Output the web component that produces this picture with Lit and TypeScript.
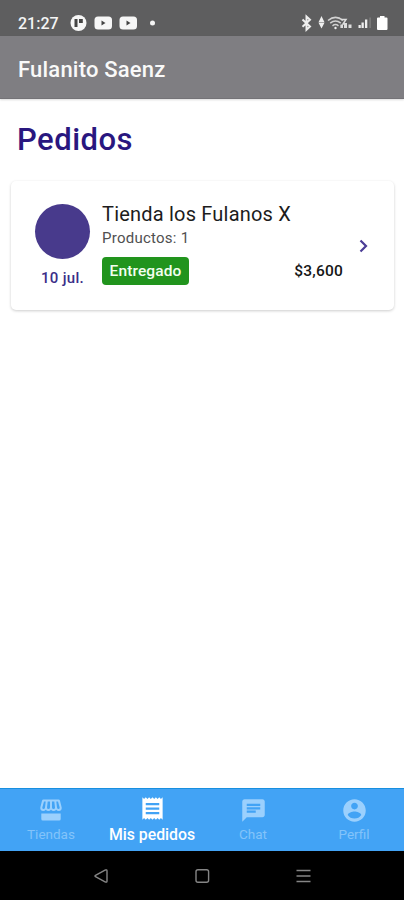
import { LitElement, html, svg, css } from "lit";
import { customElement, property } from "lit/decorators.js";
import { classMap } from "lit/directives/class-map.js";

@customElement("status-bar")
class StatusBar extends LitElement {
  static styles = css`
    :host { display: flex; align-items: center; height: 36px; box-sizing: border-box; padding: 10px 16px 0 18px; background: #5e5e5f; color: #f4f4f4; }
    .time { font: 500 16px/24px Roboto, sans-serif; width: 52px; padding-top: 1px; letter-spacing: 0; }
    svg { display: block; flex: none; }
    .notes { width: 88px; height: 18px; }
    .system { width: 90px; height: 18px; margin-left: auto; }
  `;
  render() {
    return html`
      <span class="time">21:27</span>
      <svg class="notes" viewBox="70 14 88 18">
        <circle cx="78.5" cy="23" r="8" fill="#f6f6f6" />
        <path d="M74.500 19h3v8h-3zM79 19h3.800v4H79z" fill="#444" />
        <rect x="94.500" y="16.500" width="17.500" height="13" rx="3.500" fill="#f6f6f6" />
        <path d="M101.500 20.500v5l4-2.500z" fill="#444" />
        <rect x="119.500" y="16.500" width="17.500" height="13" rx="3.500" fill="#f6f6f6" />
        <path d="M126.500 20.500v5l4-2.500z" fill="#444" />
        <circle cx="152.500" cy="23" r="2.500" fill="#f4f4f4" />
      </svg>
      <svg class="system" viewBox="298 14 90 18">
        <path d="M302.500 19.500l7.500 7-3.500 3.200V16.500l3.500 3.200-7.500 7" fill="none" stroke="#eee" stroke-width="2" />
        <path d="M321.500 16l3 6.200h-6zM321.500 28.500l3-5.700h-6z" fill="#eee" />
        <g fill="none" stroke="#d2d2d2" stroke-width="1.500">
          <path d="M328 20.500q7.500-6.200 15 0M330.200 23.200q5.300-4.300 10.600 0M332.500 25.800q3-2.400 6 0" />
        </g>
        <circle cx="335.500" cy="28" r="1.200" fill="#eee" />
        <path d="M341 19.500h5l-3 4.500h4M341.500 28v-3" fill="none" stroke="#ddd" stroke-width="1.500" />
        <path d="M340.500 24.500h2.500V28h-2.500zM344 23h3v5h-3zM348.500 24.500h3V28h-3z" fill="#ddd" />
        <path d="M358.500 25h2.300v3h-2.300zM361.500 22.500h2.300V28h-2.300zM365 19.500h2.300V28H365z" fill="#eee" />
        <path d="M369.500 17.500h1.200V28h-1.200z" fill="#858585" />
        <path d="M380 16h4.500v1.500h2a1 1 0 0 1 1 1V29a1 1 0 0 1-1 1h-8.500a1 1 0 0 1-1-1V18.500a1 1 0 0 1 1-1h2z" fill="#fff" />
      </svg>
    `;
  }
}

@customElement("order-card")
class OrderCard extends LitElement {
  @property() store = "";
  @property() count = "";
  @property() date = "";
  @property() status = "";
  @property() total = "";
  static styles = css`
    :host { display: grid; grid-template-columns: 54px 241px 1fr; column-gap: 13px; box-sizing: border-box; height: 129px; margin: 0 10px 0 11px; padding: 22px 20px 0 24px; border-radius: 5px; background: #fff; box-shadow: 0 1px 3px rgba(0, 0, 0, 0.2); font-family: Roboto, sans-serif; }
    .side { display: flex; flex-direction: column; align-items: center; }
    .avatar { width: 55px; height: 55px; border-radius: 50%; background: #483a8c; margin-top: 1px; }
    .date { font: 500 15px/20px Roboto, sans-serif; color: #3a2e88; margin: 9px 0 0 1px; letter-spacing: 0.3px; white-space: nowrap; }
    .name { font-size: 20px; line-height: 24px; letter-spacing: 0.2px; color: #1c1c1c; white-space: nowrap; margin-top: -1px; }
    .count { font-size: 15px; line-height: 20px; letter-spacing: 0.25px; color: #505050; margin-top: 2px; }
    .row { display: flex; align-items: center; justify-content: space-between; margin-top: 9px; }
    .badge { width: 87px; height: 28px; border-radius: 4px; background: #21941d; color: #f3fff0; font: 500 15.5px/29px Roboto, sans-serif; text-align: center; letter-spacing: 0.1px; }
    .total { font: 500 15.5px/20px Roboto, sans-serif; letter-spacing: 0.2px; color: #161616; }
    svg { width: 10px; height: 14px; margin: 36px 0 0 3px; }
  `;
  render() {
    return html`
      <div class="side"><div class="avatar"></div><div class="date">${this.date}</div></div>
      <div>
        <div class="name">${this.store}</div>
        <div class="count">Productos: ${this.count}</div>
        <div class="row"><span class="badge">${this.status}</span><span class="total">${this.total}</span></div>
      </div>
      <svg viewBox="0 0 10 14"><path d="M1.500 1.500L7 7l-5.500 5.500" fill="none" stroke="#4b3d96" stroke-width="2.200" /></svg>
    `;
  }
}

const tabs = [
  { label: "Tiendas", icon: svg`<path fill-rule="evenodd" d="M4.500 1h15q1.200 0 1.500 1.200L22.700 9q.3 3.200-2.900 3.500-1.700 0-2.600-1.200-1 1.200-2.600 1.200T12 11.300q-1 1.200-2.600 1.200t-2.600-1.200q-1 1.200-2.600 1.200Q1 12.200 1.300 9L3 2.200Q3.300 1 4.500 1zM5 3L3.300 9q0 1.500 1.200 1.500T6 9l.7-6zm3.700 0L8 9q0 1.500 1.400 1.500T11 9V3zM13 3v6q.2 1.500 1.600 1.500T16 9l-.7-6zm4.300 0L18 9q.3 1.500 1.500 1.500T20.700 9L19 3zM2.300 15h19.400v5.500q0 1.500-1.500 1.500H3.800q-1.500 0-1.500-1.500z"/>` },
  { label: "Mis pedidos", active: true, icon: svg`<path d="M18 17H6v-2h12v2zm0-4H6v-2h12v2zm0-4H6V7h12v2zM3 22l1.500-1.500L6 22l1.500-1.500L9 22l1.500-1.500L12 22l1.500-1.500L15 22l1.500-1.500L18 22l1.500-1.500L21 22V2l-1.500 1.500L18 2l-1.500 1.500L15 2l-1.500 1.500L12 2l-1.500 1.500L9 2 7.500 3.500 6 2 4.500 3.500 3 2v20z"/>` },
  { label: "Chat", icon: svg`<path d="M20 2H4c-1.100 0-1.990.9-1.990 2L2 22l4-4h14c1.100 0 2-.9 2-2V4c0-1.100-.9-2-2-2zM6 9h12v2H6V9zm8 5H6v-2h8v2zm4-6H6V6h12v2z"/>` },
  { label: "Perfil", icon: svg`<path d="M12 2C6.480 2 2 6.480 2 12s4.480 10 10 10 10-4.480 10-10S17.520 2 12 2zm0 3c1.660 0 3 1.340 3 3s-1.340 3-3 3-3-1.340-3-3 1.340-3 3-3zm0 14.200c-2.500 0-4.710-1.280-6-3.220.03-1.990 4-3.080 6-3.080 1.990 0 5.970 1.090 6 3.080-1.290 1.940-3.500 3.220-6 3.220z"/>` },
];

@customElement("tab-bar")
class TabBar extends LitElement {
  static styles = css`
    :host { display: grid; grid-template-columns: repeat(4, 1fr); box-sizing: border-box; height: 63px; border-top: 1px solid #188fdf; background: #42a3f5; }
    .tab { display: flex; flex-direction: column; align-items: center; padding: 8px 0 0 1px; color: #83c3fa; font: 400 13.5px/18px Roboto, sans-serif; letter-spacing: 0; }
    .tab svg { width: 27px; height: 27px; fill: #9bd0fd; }
    .tab span { margin-top: 1px; white-space: nowrap; }
    .tab.store svg { width: 24px; height: 25px; margin: 1px 0; }
    .tab.active { padding-top: 6px; color: #fff; font-size: 15.8px; font-weight: 500; letter-spacing: 0; }
    .tab.active svg { fill: #fff; }
    .tab.active span { margin-top: 4px; }
  `;
  render() {
    return tabs.map((t, i) => html`
      <div class=${classMap({ tab: true, active: !!t.active, store: i === 0 })}>
        <svg viewBox="0 0 24 24">${t.icon}</svg><span>${t.label}</span>
      </div>`);
  }
}

@customElement("app-root")
class AppRoot extends LitElement {
  static styles = css`
    :host { display: flex; flex-direction: column; height: 900px; background: #fff; overflow: hidden; }
    .header { height: 63px; box-sizing: border-box; padding: 19px 18px 0; background: #7f7e82; border-bottom: 1px solid #747377; box-shadow: 0 1px 2px rgba(0, 0, 0, 0.15); color: #f9f9f9; font: 500 22px/30px Roboto, sans-serif; letter-spacing: 0.2px; }
    h1 { margin: 22px 18px 22px 17px; color: #29177f; font: 500 31px/38px Roboto, sans-serif; letter-spacing: 0.5px; }
    .main { flex: 1; }
    .keys { display: flex; align-items: center; justify-content: space-around; height: 49px; box-sizing: border-box; padding: 0 50px; background: #000; }
    .keys svg { width: 18px; height: 18px; fill: none; stroke: #858585; stroke-width: 1.4; }
  `;
  render() {
    return html`
      <status-bar></status-bar>
      <div class="header">Fulanito Saenz</div>
      <div class="main">
        <h1>Pedidos</h1>
        <order-card store="Tienda los Fulanos X" count="1" date="10 jul." status="Entregado" total="$3,600"></order-card>
      </div>
      <tab-bar></tab-bar>
      <div class="keys">
        <svg viewBox="0 0 18 18"><path d="M13.500 3q1.500-.6 1.500 1v10q0 1.600-1.500 1L3.500 9.700q-1-.7 0-1.400z" /></svg>
        <svg viewBox="0 0 18 18"><rect x="3" y="2.700" width="12.600" height="12.600" rx="2" /></svg>
        <svg viewBox="0 0 18 18"><path d="M2.500 3.500h14M2.500 9h14M2.500 14.500h14" /></svg>
      </div>
    `;
  }
}
